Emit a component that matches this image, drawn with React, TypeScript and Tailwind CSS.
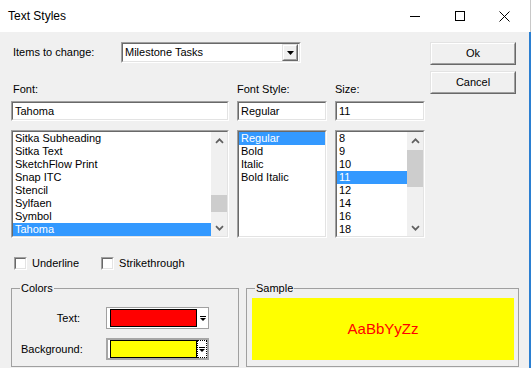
import React from "react";

const fonts = [
  "Sitka Subheading",
  "Sitka Text",
  "SketchFlow Print",
  "Snap ITC",
  "Stencil",
  "Sylfaen",
  "Symbol",
  "Tahoma",
];
const styles = ["Regular", "Bold", "Italic", "Bold Italic"];
const sizes = ["8", "9", "10", "11", "12", "14", "16", "18"];

function Sunken({ className = "", children }: { className?: string; children?: React.ReactNode }) {
  return (
    <div className={`border border-t-[#a0a0a0] border-l-[#a0a0a0] border-b-white border-r-white ${className}`}>
      <div className="h-full w-full border border-t-[#696969] border-l-[#696969] border-b-[#e3e3e3] border-r-[#e3e3e3] bg-white">
        {children}
      </div>
    </div>
  );
}

function Chevron({ down = false }: { down?: boolean }) {
  return (
    <svg width="9" height="6" viewBox="0 0 9 6">
      <path
        d={down ? "M1 1.2 L4.5 4.7 L8 1.2" : "M1 4.8 L4.5 1.3 L8 4.8"}
        fill="none"
        stroke="#606060"
        strokeWidth="1.7"
      />
    </svg>
  );
}

function ScrollBar({ thumbTop, thumbH }: { thumbTop: string; thumbH: string }) {
  return (
    <div className="flex h-full w-[16px] flex-col bg-[#f0f0f0]">
      <div className="flex h-[17px] items-center justify-center">
        <Chevron />
      </div>
      <div className="flex-1">
        <div className={`${thumbTop} ${thumbH} bg-[#cdcdcd]`} />
      </div>
      <div className="flex h-[17px] items-center justify-center">
        <Chevron down />
      </div>
    </div>
  );
}

function ListBox({
  items,
  selected,
  className,
  scroll,
}: {
  items: string[];
  selected: number;
  className: string;
  scroll?: { top: string; h: string };
}) {
  return (
    <Sunken className={className}>
      <div className="flex h-full">
        <div className="flex-1 overflow-hidden">
          {items.map((it, i) => (
            <div
              key={it}
              className={`h-[13px] pl-[2px] leading-[13px] whitespace-nowrap ${i === selected ? "bg-[#3399ff] text-white" : ""}`}
            >
              {it}
            </div>
          ))}
        </div>
        {scroll && <ScrollBar thumbTop={scroll.top} thumbH={scroll.h} />}
      </div>
    </Sunken>
  );
}

function Raised({ className = "", children }: { className?: string; children?: React.ReactNode }) {
  return (
    <div className={`border border-t-[#e3e3e3] border-l-[#e3e3e3] border-b-[#696969] border-r-[#696969] ${className}`}>
      <div className="flex h-full w-full items-center justify-center border border-t-white border-l-white border-b-[#a0a0a0] border-r-[#a0a0a0] bg-[#f0f0f0]">
        {children}
      </div>
    </div>
  );
}

function TinyArrow() {
  return (
    <svg width="6" height="5" viewBox="0 0 6 5">
      <rect x="0" y="0" width="6" height="1" fill="#000" />
      <polygon points="0,2 6,2 3,5" fill="#000" />
    </svg>
  );
}

function Checkbox({ label }: { label: string }) {
  return (
    <div className="flex items-center gap-[5px]">
      <div className="h-[13px] w-[13px] border border-t-[#a0a0a0] border-l-[#a0a0a0] border-b-white border-r-white">
        <div className="h-full w-full border border-t-[#696969] border-l-[#696969] border-b-[#e3e3e3] border-r-[#e3e3e3] bg-white" />
      </div>
      <span>{label}</span>
    </div>
  );
}

export default function App() {
  return (
    <div className="flex h-[368px] w-[531px] flex-col overflow-hidden bg-[#f0f0f0] font-['Liberation_Sans',Arial,sans-serif] text-[11px] text-black">
      {/* title bar */}
      <div className="flex h-[32px] shrink-0 items-center border-r border-[#c8c8c8] bg-white pl-[8px]">
        <span className="text-[12px]">Text Styles</span>
        <div className="ml-auto flex pr-[3px]">
          <div className="flex h-[32px] w-[45px] items-center justify-center">
            <div className="mt-[1px] h-[1px] w-[10px] bg-black" />
          </div>
          <div className="flex h-[32px] w-[45px] items-center justify-center">
            <div className="h-[10px] w-[10px] border border-black" />
          </div>
          <div className="flex h-[32px] w-[45px] items-center justify-center">
            <svg width="11" height="11" viewBox="0 0 11 11">
              <path d="M0.5 0.5 L10.5 10.5 M10.5 0.5 L0.5 10.5" stroke="#000" strokeWidth="1" />
            </svg>
          </div>
        </div>
      </div>

      {/* body */}
      <div className="flex-1 border-r-2 border-[#2b7fd1] pl-[11px] pt-[10px]">
        <div className="flex">
          <div className="w-[414px]">
            <div className="flex h-[21px] items-center">
              <div className="w-[110px] pl-[2px]">Items to change:</div>
              <Sunken className="h-[21px] w-[180px]">
                <div className="flex h-full items-center">
                  <span className="flex-1 pl-[2px]">Milestone Tasks</span>
                  <Raised className="mr-[1px] h-[17px] w-[16px]">
                    <svg width="7" height="4" viewBox="0 0 7 4">
                      <polygon points="0,0 7,0 3.5,4" fill="#000" />
                    </svg>
                  </Raised>
                </div>
              </Sunken>
            </div>

            <div className="mt-[20px] flex h-[13px] items-center leading-[13px]">
              <div className="w-[226px] pl-[2px]">Font:</div>
              <div className="w-[98px]">Font Style:</div>
              <div>Size:</div>
            </div>

            <div className="mt-[5px] flex gap-[8px]">
              <Sunken className="h-[20px] w-[218px]">
                <div className="pl-[2px] leading-[16px]">Tahoma</div>
              </Sunken>
              <Sunken className="h-[20px] w-[90px]">
                <div className="pl-[2px] leading-[16px]">Regular</div>
              </Sunken>
              <Sunken className="h-[20px] w-[90px]">
                <div className="pl-[2px] leading-[16px]">11</div>
              </Sunken>
            </div>

            <div className="mt-[9px] flex gap-[8px]">
              <ListBox
                items={fonts}
                selected={7}
                className="h-[108px] w-[218px]"
                scroll={{ top: "mt-[46px]", h: "h-[17px]" }}
              />
              <ListBox items={styles} selected={0} className="h-[108px] w-[90px]" />
              <ListBox
                items={sizes}
                selected={3}
                className="h-[108px] w-[90px]"
                scroll={{ top: "mt-[1px]", h: "h-[37px]" }}
              />
            </div>
          </div>

          <div className="ml-[5px] flex flex-col gap-[6px]">
            <Raised className="h-[23px] w-[86px]">Ok</Raised>
            <Raised className="h-[23px] w-[86px]">Cancel</Raised>
          </div>
        </div>

        <div className="mt-[19px] flex h-[13px] items-center gap-[22px] pl-[3px]">
          <Checkbox label="Underline" />
          <Checkbox label="Strikethrough" />
        </div>

        <div className="mt-[12px] flex gap-[7px]">
          <fieldset className="h-[85px] w-[228px] border border-[#a0a0a0] pb-[6px]">
            <legend className="ml-[8px] px-[1px] leading-[13px]">Colors</legend>
            <div className="mt-[12px] flex items-center">
              <div className="w-[94px] pr-[26px] text-right">Text:</div>
              <div className="flex h-[22px] w-[103px] items-center border border-[#a0a0a0] bg-white pl-[3px]">
                <div className="h-[18px] w-[87px] border border-black bg-[#ff0000]" />
                <div className="flex flex-1 justify-center pt-[1px]">
                  <TinyArrow />
                </div>
              </div>
            </div>
            <div className="mt-[9px] flex items-center">
              <div className="w-[94px] pl-[9px]">Background:</div>
              <div className="flex h-[22px] w-[103px] items-center border-2 border-[#a6a6a6] bg-white pl-[2px]">
                <div className="h-[18px] w-[87px] border border-black bg-[#ffff00]" />
                <div className="flex h-[18px] flex-1 items-center justify-center border border-dotted border-black pt-[1px]">
                  <TinyArrow />
                </div>
              </div>
            </div>
          </fieldset>

          <fieldset className="h-[85px] w-[273px] border border-[#a0a0a0] pb-[6px]">
            <legend className="ml-[8px] px-[1px] leading-[13px]">Sample</legend>
            <div className="ml-[5px] mt-[3px] flex h-[62px] w-[262px] items-center justify-center bg-[#ffff00] text-[15px] text-[#ff0000]">
              AaBbYyZz
            </div>
          </fieldset>
        </div>
      </div>
    </div>
  );
}
